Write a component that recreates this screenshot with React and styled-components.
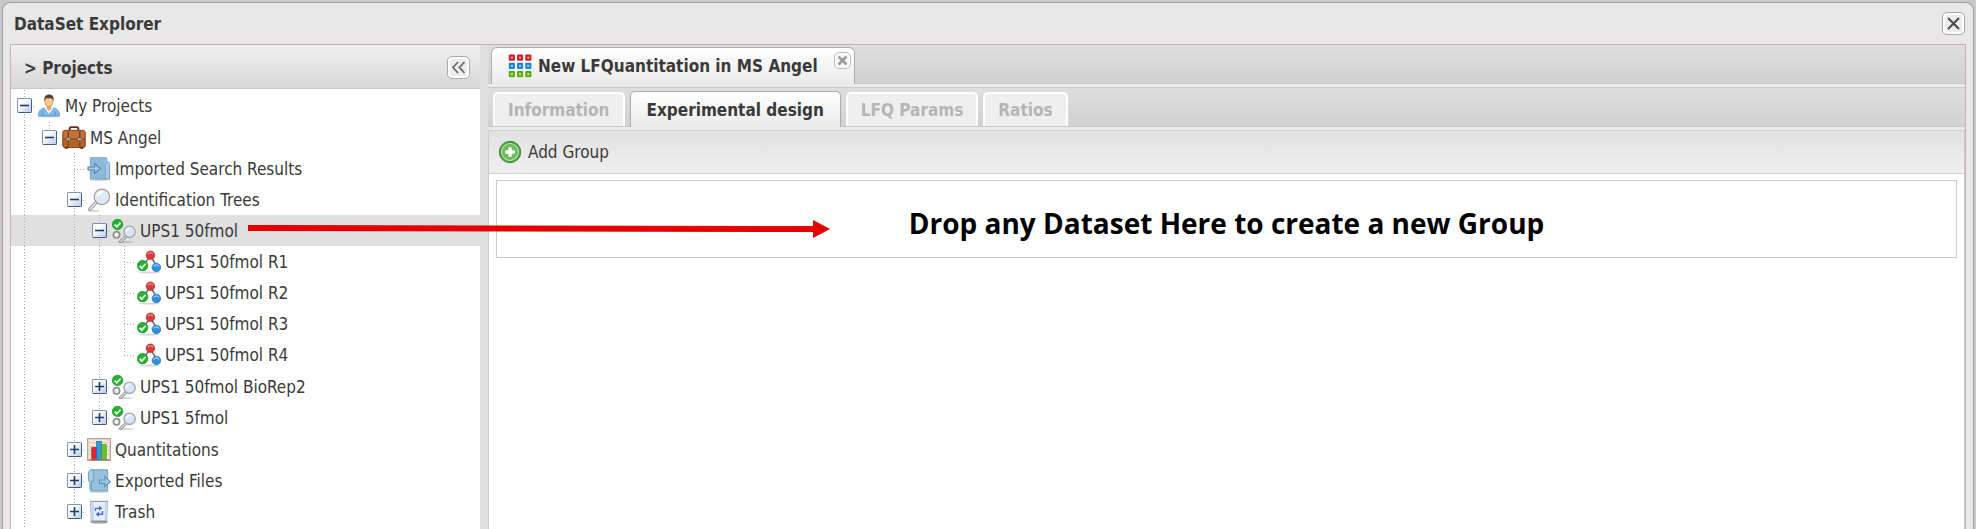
import React, { useState } from "react";
import styled, { createGlobalStyle, css } from "styled-components";

const GlobalStyle = createGlobalStyle`
  *, *::before, *::after { box-sizing: border-box; }
  body {
    margin: 0;
    background: #c9c9c9;
    color: #3a3a3a;
    font: 17px/24px "DejaVu Sans Condensed", "DejaVu Sans", Tahoma, sans-serif;
  }
  button { font: inherit; color: inherit; }
`;

/* ---------- window ---------- */

const Page = styled.div`
  display: flex;
  min-height: 100vh;
  padding: 2px 2px 0;
`;

const Window = styled.main`
  flex: 1;
  min-width: 0;
  display: flex;
  flex-direction: column;
  border: 1px solid #a2a2a2;
  border-bottom: 0;
  border-radius: 8px 8px 0 0;
  background: #e8e8e8;
  padding: 0 7px;
`;

const TitleBar = styled.header`
  display: flex;
  align-items: center;
  justify-content: space-between;
  height: 41px;
  padding: 0 1px 0 4px;
`;

const Title = styled.h1`
  margin: 0;
  font-size: 17px;
  line-height: 24px;
`;

const ToolButton = styled.button`
  display: grid;
  place-items: center;
  width: 23px;
  height: 23px;
  padding: 0;
  border: 1px solid #a9a9a9;
  border-radius: 5px;
  background: #ececec;
  box-shadow: inset 0 0 0 2px #fff;
  cursor: pointer;
`;

const Body = styled.div`
  position: relative;
  flex: 1;
  display: flex;
  border: 1px solid #c4b3b3;
  border-bottom: 0;
  background: #e0e0e0;
`;

/* ---------- projects panel ---------- */

const Sidebar = styled.aside`
  flex: none;
  width: 469px;
  margin-right: 8px;
  background: #fff;
`;

const PanelHeader = styled.div`
  display: flex;
  align-items: center;
  justify-content: space-between;
  height: 44px;
  padding: 2px 10px 0 13px;
  border-bottom: 1px solid #c6c6c6;
  background: linear-gradient(#f1f1f1, #d7d7d7);
`;

const PanelTitle = styled.h2`
  margin: 0;
  font-size: 17px;
  line-height: 24px;
`;

const Tree = styled.ul`
  margin: 0;
  padding: 1px 0 0;
  list-style: none;
`;

const SubTree = styled(Tree)`
  padding: ${(p) => (p.$root ? "1px 0 0" : "0 0 1px")};
`;

const Row = styled.div`
  display: flex;
  align-items: center;
  height: 31px;
  padding-left: 1px;
  background: ${(p) => (p.$selected ? "#e0e0e0" : "transparent")};
`;

const dotsDown = "repeating-linear-gradient(#b0b0b0 0 1px, transparent 1px 3px)";
const dotsAcross = "repeating-linear-gradient(90deg, #b0b0b0 0 1px, transparent 1px 3px)";

const Guide = styled.span`
  flex: none;
  display: grid;
  place-items: center;
  width: 25px;
  height: 31px;
  background-repeat: no-repeat;
  ${(p) =>
    p.$line &&
    css`
      background-image: ${dotsDown};
      background-position: 12px 0;
      background-size: 1px 100%;
    `}
  ${(p) =>
    p.$elbow &&
    css`
      background-image: ${dotsDown}, ${dotsAcross};
      background-position: 12px 0, 12px 16px;
      background-size: 1px ${p.$last ? "50%" : "100%"}, 12px 1px;
    `}
`;

const Expander = styled.button`
  display: grid;
  place-items: center;
  width: 15px;
  height: 15px;
  padding: 0;
  border: 1px solid #7c93b5;
  border-right-color: #3f5c88;
  border-bottom-color: #3f5c88;
  border-radius: 2px;
  background: linear-gradient(135deg, #fff 30%, #bccbe2);
  cursor: pointer;
`;

const Label = styled.span`
  padding-left: 4px;
  white-space: nowrap;
`;

/* ---------- work area ---------- */

const Workspace = styled.section`
  flex: 1;
  min-width: 0;
  display: flex;
  flex-direction: column;
`;

const TabStrip = styled.div`
  display: flex;
  align-items: flex-end;
  height: 43px;
  padding-left: ${(p) => (p.$sub ? 5 : 3)}px;
  border-bottom: 1px solid ${(p) => (p.$sub ? "#d0d0d0" : "#c8c8c8")};
  background: linear-gradient(#dedede, #d1d1d1 38px, #c8c8c8 38px 39px, #ebebeb 39px);
`;

const TabSlot = styled.div`
  position: relative;
  margin-bottom: 3px;
`;

const MainTab = styled.button`
  display: flex;
  align-items: center;
  gap: 6px;
  height: 37px;
  padding: 0 36px 0 16px;
  border: 1px solid #adadad;
  border-bottom: 0;
  border-radius: 6px 6px 0 0;
  background: linear-gradient(#fff, #ebebeb);
  font-weight: bold;
  white-space: nowrap;
`;

const TabClose = styled.button`
  position: absolute;
  top: 5px;
  right: 4px;
  display: grid;
  place-items: center;
  width: 17px;
  height: 17px;
  padding: 0;
  border: 1px solid #bdbdbd;
  border-radius: 5px;
  background: #fafafa;
  cursor: pointer;
`;

const SubTab = styled.button`
  height: 34px;
  margin: 0 5px 4px 0;
  padding: 0 13px;
  border: 2px solid #fff;
  border-bottom: 0;
  border-radius: 5px 5px 0 0;
  background: #efefef;
  color: #b5b5b5;
  font-weight: bold;
  white-space: nowrap;
  ${(p) =>
    p.$active &&
    css`
      height: 36px;
      margin-bottom: 3px;
      padding: 0 16px;
      border: 1px solid #adadad;
      border-bottom: 0;
      background: linear-gradient(#fff, #ebebeb);
      color: #3a3a3a;
    `}
`;

const Panel = styled.div`
  flex: 1;
  display: flex;
  flex-direction: column;
  border: 1px solid #cbcbcb;
  border-width: 0 1px;
  background: #fff;
`;

const Toolbar = styled.div`
  display: flex;
  align-items: center;
  height: 43px;
  padding: 0 8px 0 9px;
  border-bottom: 1px solid #cfcfcf;
  background: linear-gradient(#e2e2e2, #efefef);
`;

const AddButton = styled.button`
  display: flex;
  align-items: center;
  gap: 6px;
  padding: 0;
  border: 0;
  background: none;
  cursor: pointer;
`;

const DropZone = styled.div`
  margin: 6px 7px;
  padding: 24px 16px 16px;
  border: 1px solid #cccccc;
  color: #000;
  font: bold 28px/36px "Open Sans", "Noto Sans", Tahoma, sans-serif;
  text-align: center;
`;

const DragArrow = styled.svg`
  position: absolute;
  left: 237px;
  top: 175px;
  pointer-events: none;
`;

/* ---------- icons ---------- */

const Svg = ({ children, size = 24 }) => (
  <svg width={size} height={size} viewBox="0 0 25 25" aria-hidden="true">
    {children}
  </svg>
);

const UserIcon = () => (
  <Svg>
    <ellipse cx="12.500" cy="23.500" rx="11" ry="1" fill="#000" opacity=".15" />
    <path d="M1.500 23c0-5 2-7.500 6-8.500l5 2 5-2c4 1 6 3.500 6 8.500z" fill="#7fb9ea" stroke="#4c8dc9" strokeWidth=".8" />
    <path d="M8 14.500l4.500 6 4.500-6-2-1.500h-5z" fill="#f5f9ff" />
    <path d="M10 11h5v4l-2.500 3-2.500-3z" fill="#e3aa6a" />
    <ellipse cx="12.500" cy="8" rx="4.300" ry="5.300" fill="#f6c98d" stroke="#b88145" strokeWidth=".6" />
    <path d="M7.800 8c-1-5 1.500-7.500 4.900-7.500S18 3 17.200 8c-.6-2.500-1.500-3.300-3-3.500-2 .3-3.400 0-4.200-.3-1.200.8-1.900 1.900-2.200 3.800z" fill="#5f3c31" />
    <path d="M6 18v5M19 18v5" stroke="#4c8dc9" strokeWidth=".8" />
  </Svg>
);

const CaseIcon = () => (
  <Svg>
    <path d="M8 4.500V2.500Q8 1.200 9.500 1.200h6Q17 1.200 17 2.500v2" fill="none" stroke="#6b2a22" strokeWidth="2" />
    <rect x=".8" y="4.500" width="23.400" height="18" rx="2.500" fill="#b4632a" stroke="#7c3a14" />
    <path d="M1.500 6.500q0-1.500 1.500-1.500h19q1.500 0 1.500 1.500V13h-22z" fill="#c2733a" />
    <path d="M6.500 5v17.500M18.500 5v17.500" stroke="#8a4519" strokeWidth="1.600" />
    <path d="M1 13.500h23" stroke="#8a4519" />
    <rect x="4.500" y="12.500" width="4" height="2.600" fill="#b9b9a8" stroke="#5e4a34" strokeWidth=".5" />
    <rect x="16.500" y="12.500" width="4" height="2.600" fill="#b9b9a8" stroke="#5e4a34" strokeWidth=".5" />
    <path d="M3 23h3M19 23h3" stroke="#4a200c" strokeWidth="1.500" />
  </Svg>
);

const ImportIcon = () => (
  <Svg>
    <ellipse cx="13" cy="23.800" rx="11" ry="1" fill="#000" opacity=".22" />
    <path d="M3.500.8h17v22h-17z" fill="#9cc4df" stroke="#6d9fc3" />
    <path d="M4 1.500h14v21H4z" fill="#86b4d5" opacity=".6" />
    <path d="M19 8q.5-3 3-3 1.500.5 1.500 3V23H19z" fill="#a9cde4" stroke="#6d9fc3" />
    <path d="M1 10.500h7V7l6 5-6 5v-3.500H1z" fill="#a5cbe2" stroke="#4b85af" strokeWidth="1.100" />
  </Svg>
);

const ExportIcon = () => (
  <Svg>
    <ellipse cx="12" cy="23.800" rx="11" ry="1" fill="#000" opacity=".2" />
    <path d="M4.500.8h17v22h-17z" fill="#98bfdb" stroke="#6d9fc3" />
    <path d="M1.500 3.500q.5-2.700 3.300-2.700Q7 .8 7 4v8.500H4.500V23L3 21V12.500H1.500z" fill="#a9cbe2" stroke="#6d9fc3" />
    <path d="M13 11.500h5.500V8l6 5.200-6 5.200V15H13z" fill="#9fc8e2" stroke="#5a92b9" strokeWidth="1.100" />
  </Svg>
);

const SearchIcon = () => (
  <Svg>
    <ellipse cx="7" cy="23.800" rx="6" ry=".9" fill="#000" opacity=".2" />
    <path d="M10.500 14L3 22" stroke="#8f8f8f" strokeWidth="3.600" strokeLinecap="round" />
    <path d="M10.500 14L3 22" stroke="#dedede" strokeWidth="1.800" strokeLinecap="round" />
    <circle cx="15.500" cy="9.200" r="8" fill="#dfeaf8" stroke="#a2a2a2" strokeWidth="1.400" />
    <path d="M10 9a5.500 5.500 0 0 1 8-5C14 5 13 9 10 9z" fill="#fff" />
    <circle cx="15.500" cy="9.200" r="6.700" fill="none" stroke="#e9e9e9" />
  </Svg>
);

const Check = ({ x, y, r = 5.2 }) => (
  <g>
    <circle cx={x} cy={y} r={r} fill="#1fb32c" stroke="#128a1e" strokeWidth=".6" />
    <path d={`M${x - 3} ${y + 0.3}l2.100 2.200 4-4.400`} fill="none" stroke="#fff" strokeWidth="1.900" />
  </g>
);

const DatasetIcon = () => (
  <Svg>
    <ellipse cx="14" cy="24" rx="9" ry=".8" fill="#000" opacity=".2" />
    <circle cx="4.700" cy="16.500" r="3.300" fill="#eee" stroke="#8d8d8d" strokeWidth="1.700" />
    <path d="M14 18.500l-5 5" stroke="#8f8f8f" strokeWidth="3.200" strokeLinecap="round" />
    <path d="M14 18.500l-5 5" stroke="#d6d6d6" strokeWidth="1.500" strokeLinecap="round" />
    <circle cx="18.300" cy="13.300" r="5.900" fill="#d9e6f7" stroke="#a6a9b0" strokeWidth="1.500" />
    <path d="M14.500 13a4 4 0 0 1 5.500-3.500C17 10 17 13 14.500 13z" fill="#fff" />
    <Check x={5.8} y={5.6} r={5.5} />
  </Svg>
);

const MoleculeIcon = () => (
  <Svg>
    <ellipse cx="13" cy="23.500" rx="11" ry="1" fill="#000" opacity=".16" />
    <path d="M14 6L6 17M14 6l7 12" stroke="#777" strokeWidth="1.700" />
    <circle cx="14" cy="5.500" r="4.500" fill="#dc3a3a" stroke="#a92222" strokeWidth=".6" />
    <path d="M11.500 4.500a2.700 2.700 0 0 1 5 0" fill="none" stroke="#f6a5a5" strokeWidth="1.100" />
    <circle cx="20.200" cy="18.200" r="4.500" fill="#2f8fdc" stroke="#1d68ad" strokeWidth=".6" />
    <path d="M17.700 17.200a2.700 2.700 0 0 1 5 0" fill="none" stroke="#a3d2f7" strokeWidth="1.100" />
    <Check x={5.8} y={16.3} r={5.5} />
  </Svg>
);

const ChartIcon = () => (
  <Svg>
    <rect x=".7" y=".7" width="23.600" height="22.600" fill="#f3e8d8" stroke="#b29a85" strokeWidth="1.200" />
    <path d="M1.500 5h22M1.500 9h22M1.500 13h22M1.500 17h22" stroke="#d8c6b0" strokeWidth=".8" />
    <rect x="5" y="10" width="5" height="12.500" fill="#e3262f" stroke="#a81119" strokeWidth=".7" />
    <rect x="10" y="3.500" width="5" height="19" fill="#2f9bdf" stroke="#1b6cab" strokeWidth=".7" />
    <rect x="15" y="7" width="5" height="15.500" fill="#6cc12d" stroke="#438a14" strokeWidth=".7" />
    <path d="M2 22.800h21" stroke="#8f7a68" />
  </Svg>
);

const TrashIcon = () => (
  <Svg>
    <ellipse cx="12.500" cy="23.800" rx="10" ry="1" fill="#000" opacity=".25" />
    <path d="M3.500 1.500h18l-1 20.500h-16z" fill="#e7effb" stroke="#a7b9d3" />
    <path d="M4.500 2.500H7v19H5.500zM18.500 2.500h2l-1 19h-1z" fill="#bfd3ec" />
    <path d="M3.500 1.500h18" stroke="#8d9db5" strokeWidth="1.200" />
    <path d="M4 22.500h17" stroke="#8a8f98" strokeWidth="2" />
    <path d="M8.800 11.500V8.700h4M16.200 11.500v3.300h-4" fill="none" stroke="#4a69dc" strokeWidth="1.400" />
    <path d="M12.500 6l3.500 2.700-3.500 2.600zM12.500 12.200L9 14.800l3.500 2.700z" fill="#4a69dc" />
  </Svg>
);

const GridIcon = () => (
  <Svg>
    {[
      ["#cf2129", "#f08a8e"],
      ["#1a86cc", "#7cc6f2"],
      ["#5aaa18", "#b0e07c"],
    ].map(([color, glow], row) =>
      [0, 1, 2].map((col) => (
        <g key={`${row}-${col}`}>
          <rect x={0.8 + col * 8.6} y={0.6 + row * 8.6} width="6.400" height="6.400" rx="1" fill={color} />
          <rect x={2.8 + col * 8.6} y={2.6 + row * 8.6} width="2.400" height="2.400" fill={glow} />
        </g>
      ))
    )}
  </Svg>
);

const AddIcon = () => (
  <Svg>
    <circle cx="12.500" cy="12.500" r="11.200" fill="#4fa045" stroke="#3f8f38" />
    <circle cx="12.500" cy="12.500" r="8.800" fill="#6dbb5c" stroke="#c5e5bb" strokeWidth="1.100" />
    <path d="M12.500 7.500v10M7.500 12.500h10" stroke="#fff" strokeWidth="3.400" />
  </Svg>
);

const CrossIcon = () => (
  <svg width="15" height="15" viewBox="0 0 15 15" aria-hidden="true">
    <path d="M2 2l11 11M13 2L2 13" stroke="#4a4a4a" strokeWidth="2" />
  </svg>
);

const SmallCrossIcon = () => (
  <svg width="11" height="11" viewBox="0 0 11 11" aria-hidden="true">
    <path d="M1.500 1.500l8 8M9.500 1.500l-8 8" stroke="#999" strokeWidth="2.600" />
  </svg>
);

const CollapseIcon = () => (
  <svg width="15" height="13" viewBox="0 0 15 13" aria-hidden="true">
    <path d="M7 1L2 6.500 7 12M13.500 1l-5 5.500 5 5.500" fill="none" stroke="#666" strokeWidth="1.700" />
  </svg>
);

const ExpanderMark = ({ open }) => (
  <svg width="9" height="9" viewBox="0 0 9 9" aria-hidden="true">
    <path d={open ? "M0 4.500h9" : "M0 4.500h9M4.500 0v9"} stroke="#1f3c6b" strokeWidth="1.600" />
  </svg>
);

/* ---------- data ---------- */

const projects = {
  label: "My Projects",
  icon: UserIcon,
  open: true,
  children: [
    {
      label: "MS Angel",
      icon: CaseIcon,
      open: true,
      children: [
        { label: "Imported Search Results", icon: ImportIcon },
        {
          label: "Identification Trees",
          icon: SearchIcon,
          open: true,
          children: [
            {
              label: "UPS1 50fmol",
              icon: DatasetIcon,
              open: true,
              selected: true,
              children: [
                { label: "UPS1 50fmol R1", icon: MoleculeIcon },
                { label: "UPS1 50fmol R2", icon: MoleculeIcon },
                { label: "UPS1 50fmol R3", icon: MoleculeIcon },
                { label: "UPS1 50fmol R4", icon: MoleculeIcon },
              ],
            },
            { label: "UPS1 50fmol BioRep2", icon: DatasetIcon, children: [] },
            { label: "UPS1 5fmol", icon: DatasetIcon, children: [] },
          ],
        },
        { label: "Quantitations", icon: ChartIcon, children: [] },
        { label: "Exported Files", icon: ExportIcon, children: [] },
        { label: "Trash", icon: TrashIcon, children: [] },
      ],
    },
  ],
};

function TreeNode({ node, guides, last }) {
  const [open, setOpen] = useState(Boolean(node.open));
  const NodeIcon = node.icon;
  return (
    <li>
      <Row $selected={node.selected}>
        {guides.map((line, i) => (
          <Guide key={i} $line={line} />
        ))}
        <Guide $elbow $last={last}>
          {node.children && (
            <Expander
              type="button"
              aria-expanded={open}
              aria-label={`Toggle ${node.label}`}
              onClick={() => setOpen(!open)}
            >
              <ExpanderMark open={open} />
            </Expander>
          )}
        </Guide>
        <NodeIcon />
        <Label>{node.label}</Label>
      </Row>
      {open && node.children && (
        <SubTree $root={guides.length === 0}>
          {node.children.map((child, i) => (
            <TreeNode
              key={child.label}
              node={child}
              guides={[...guides, !last]}
              last={i === node.children.length - 1}
            />
          ))}
        </SubTree>
      )}
    </li>
  );
}

const designTabs = ["Information", "Experimental design", "LFQ Params", "Ratios"];

export default function App() {
  return (
    <Page>
      <GlobalStyle />
      <Window>
        <TitleBar>
          <Title>DataSet Explorer</Title>
          <ToolButton type="button" aria-label="Close window">
            <CrossIcon />
          </ToolButton>
        </TitleBar>
        <Body>
          <Sidebar>
            <PanelHeader>
              <PanelTitle>&gt; Projects</PanelTitle>
              <ToolButton type="button" aria-label="Collapse projects">
                <CollapseIcon />
              </ToolButton>
            </PanelHeader>
            <Tree>
              <TreeNode node={projects} guides={[]} last={false} />
            </Tree>
          </Sidebar>
          <Workspace>
            <TabStrip role="tablist">
              <TabSlot>
                <MainTab type="button" role="tab" aria-selected="true">
                  <GridIcon />
                  New LFQuantitation in MS Angel
                </MainTab>
                <TabClose type="button" aria-label="Close tab">
                  <SmallCrossIcon />
                </TabClose>
              </TabSlot>
            </TabStrip>
            <TabStrip $sub role="tablist">
              {designTabs.map((name, i) => (
                <SubTab key={name} type="button" role="tab" $active={i === 1} aria-selected={i === 1} disabled={i !== 1}>
                  {name}
                </SubTab>
              ))}
            </TabStrip>
            <Panel>
              <Toolbar>
                <AddButton type="button">
                  <AddIcon />
                  Add Group
                </AddButton>
              </Toolbar>
              <DropZone>Drop any Dataset Here to create a new Group</DropZone>
            </Panel>
          </Workspace>
          <DragArrow width="582" height="18" viewBox="0 0 582 18" aria-hidden="true">
            <path d="M0 5l565 1V0l17 9-17 9v-6L0 11z" fill="#e60000" />
          </DragArrow>
        </Body>
      </Window>
    </Page>
  );
}
